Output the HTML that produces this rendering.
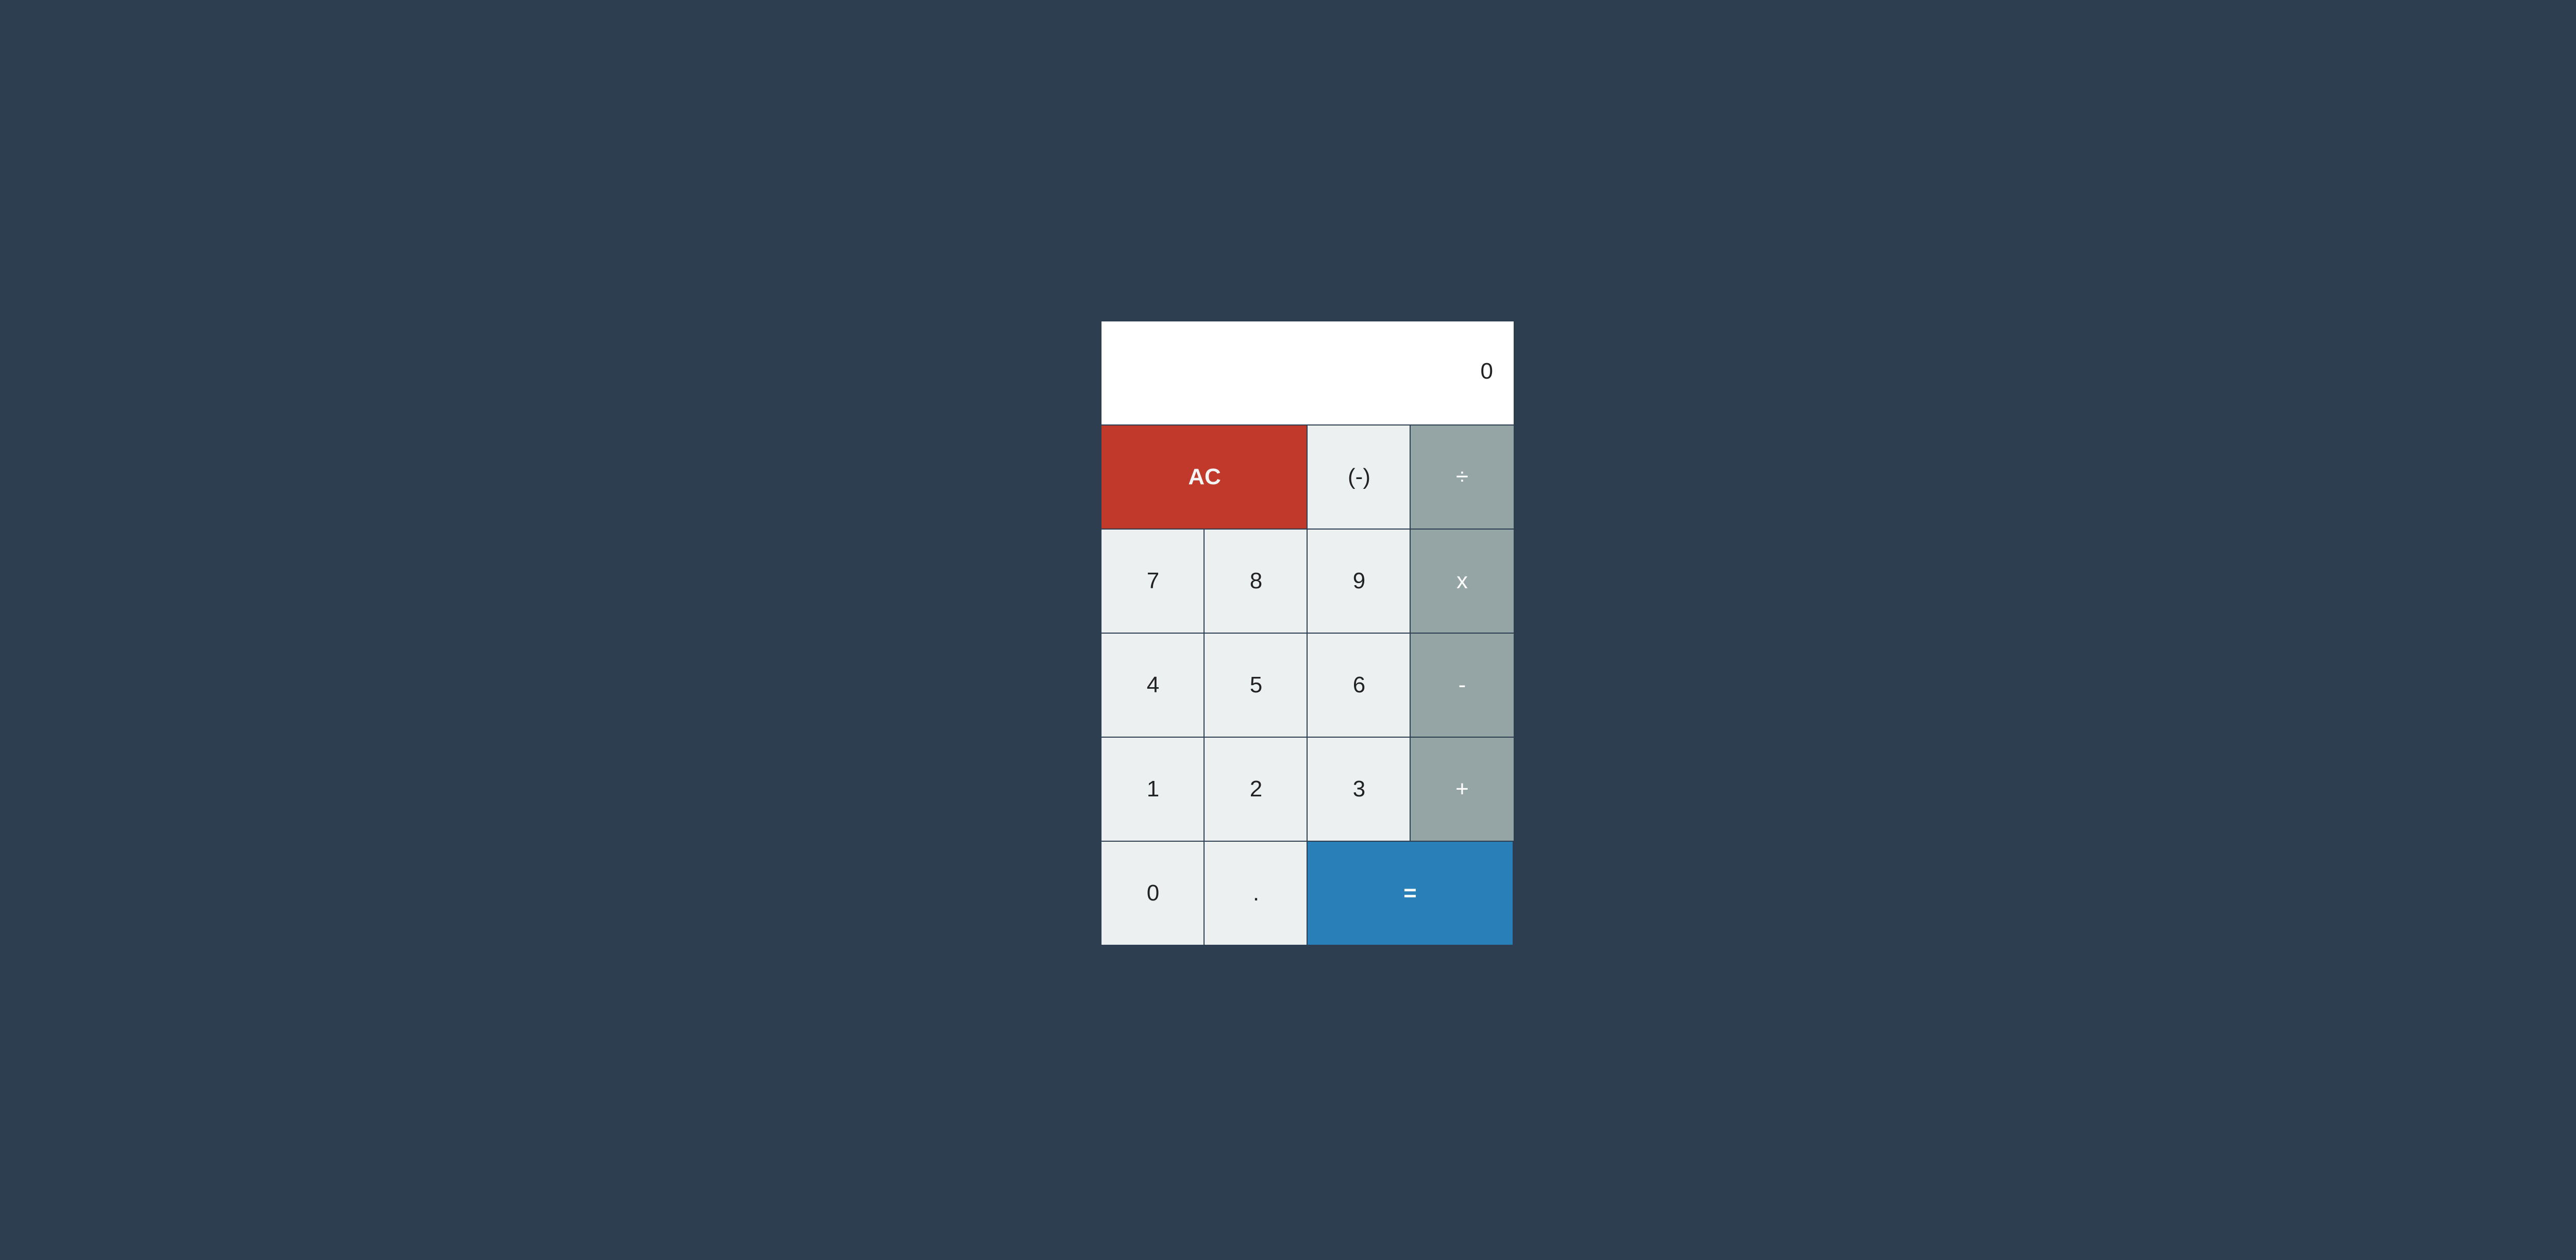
<!DOCTYPE html>
<html><head><meta charset="utf-8"><style>
html,body{margin:0;padding:0;}
body{width:5072px;height:2446px;background:#2c3e50;position:relative;overflow:hidden;font-family:"Liberation Sans",sans-serif;}
.d{position:absolute;left:2138px;top:624px;width:800px;height:200px;background:#fff;color:#222;font-size:44px;line-height:194px;text-align:right;box-sizing:border-box;padding-right:40px;}
.c{position:absolute;box-sizing:border-box;display:flex;align-items:center;justify-content:center;font-size:44px;color:#222;background:#ecf0f1;border-top:2px solid #2c3e50;border-left:2px solid #2c3e50;}
.r{background:#c0392b;color:#f4f4f4;font-weight:bold;}
.g{background:#95a5a6;color:#fff;}
.b{background:#2980b9;color:#fff;font-weight:bold;}
</style></head><body>
<div class="d">0</div>
<div class="c r" style="left:2138px;top:824px;width:400px;height:202px;border-left:0">AC</div>
<div class="c" style="left:2536px;top:824px;width:202px;height:202px">(-)</div>
<div class="c g" style="left:2736px;top:824px;width:202px;height:202px">÷</div>

<div class="c" style="left:2138px;top:1026px;width:200px;height:202px;border-left:0">7</div>
<div class="c" style="left:2336px;top:1026px;width:202px;height:202px">8</div>
<div class="c" style="left:2536px;top:1026px;width:202px;height:202px">9</div>
<div class="c g" style="left:2736px;top:1026px;width:202px;height:202px">x</div>

<div class="c" style="left:2138px;top:1228px;width:200px;height:202px;border-left:0">4</div>
<div class="c" style="left:2336px;top:1228px;width:202px;height:202px">5</div>
<div class="c" style="left:2536px;top:1228px;width:202px;height:202px">6</div>
<div class="c g" style="left:2736px;top:1228px;width:202px;height:202px">-</div>

<div class="c" style="left:2138px;top:1430px;width:200px;height:202px;border-left:0">1</div>
<div class="c" style="left:2336px;top:1430px;width:202px;height:202px">2</div>
<div class="c" style="left:2536px;top:1430px;width:202px;height:202px">3</div>
<div class="c g" style="left:2736px;top:1430px;width:202px;height:202px">+</div>

<div class="c" style="left:2138px;top:1632px;width:200px;height:202px;border-left:0">0</div>
<div class="c" style="left:2336px;top:1632px;width:202px;height:202px">.</div>
<div class="c b" style="left:2536px;top:1632px;width:400px;height:202px">=</div>
</body></html>
